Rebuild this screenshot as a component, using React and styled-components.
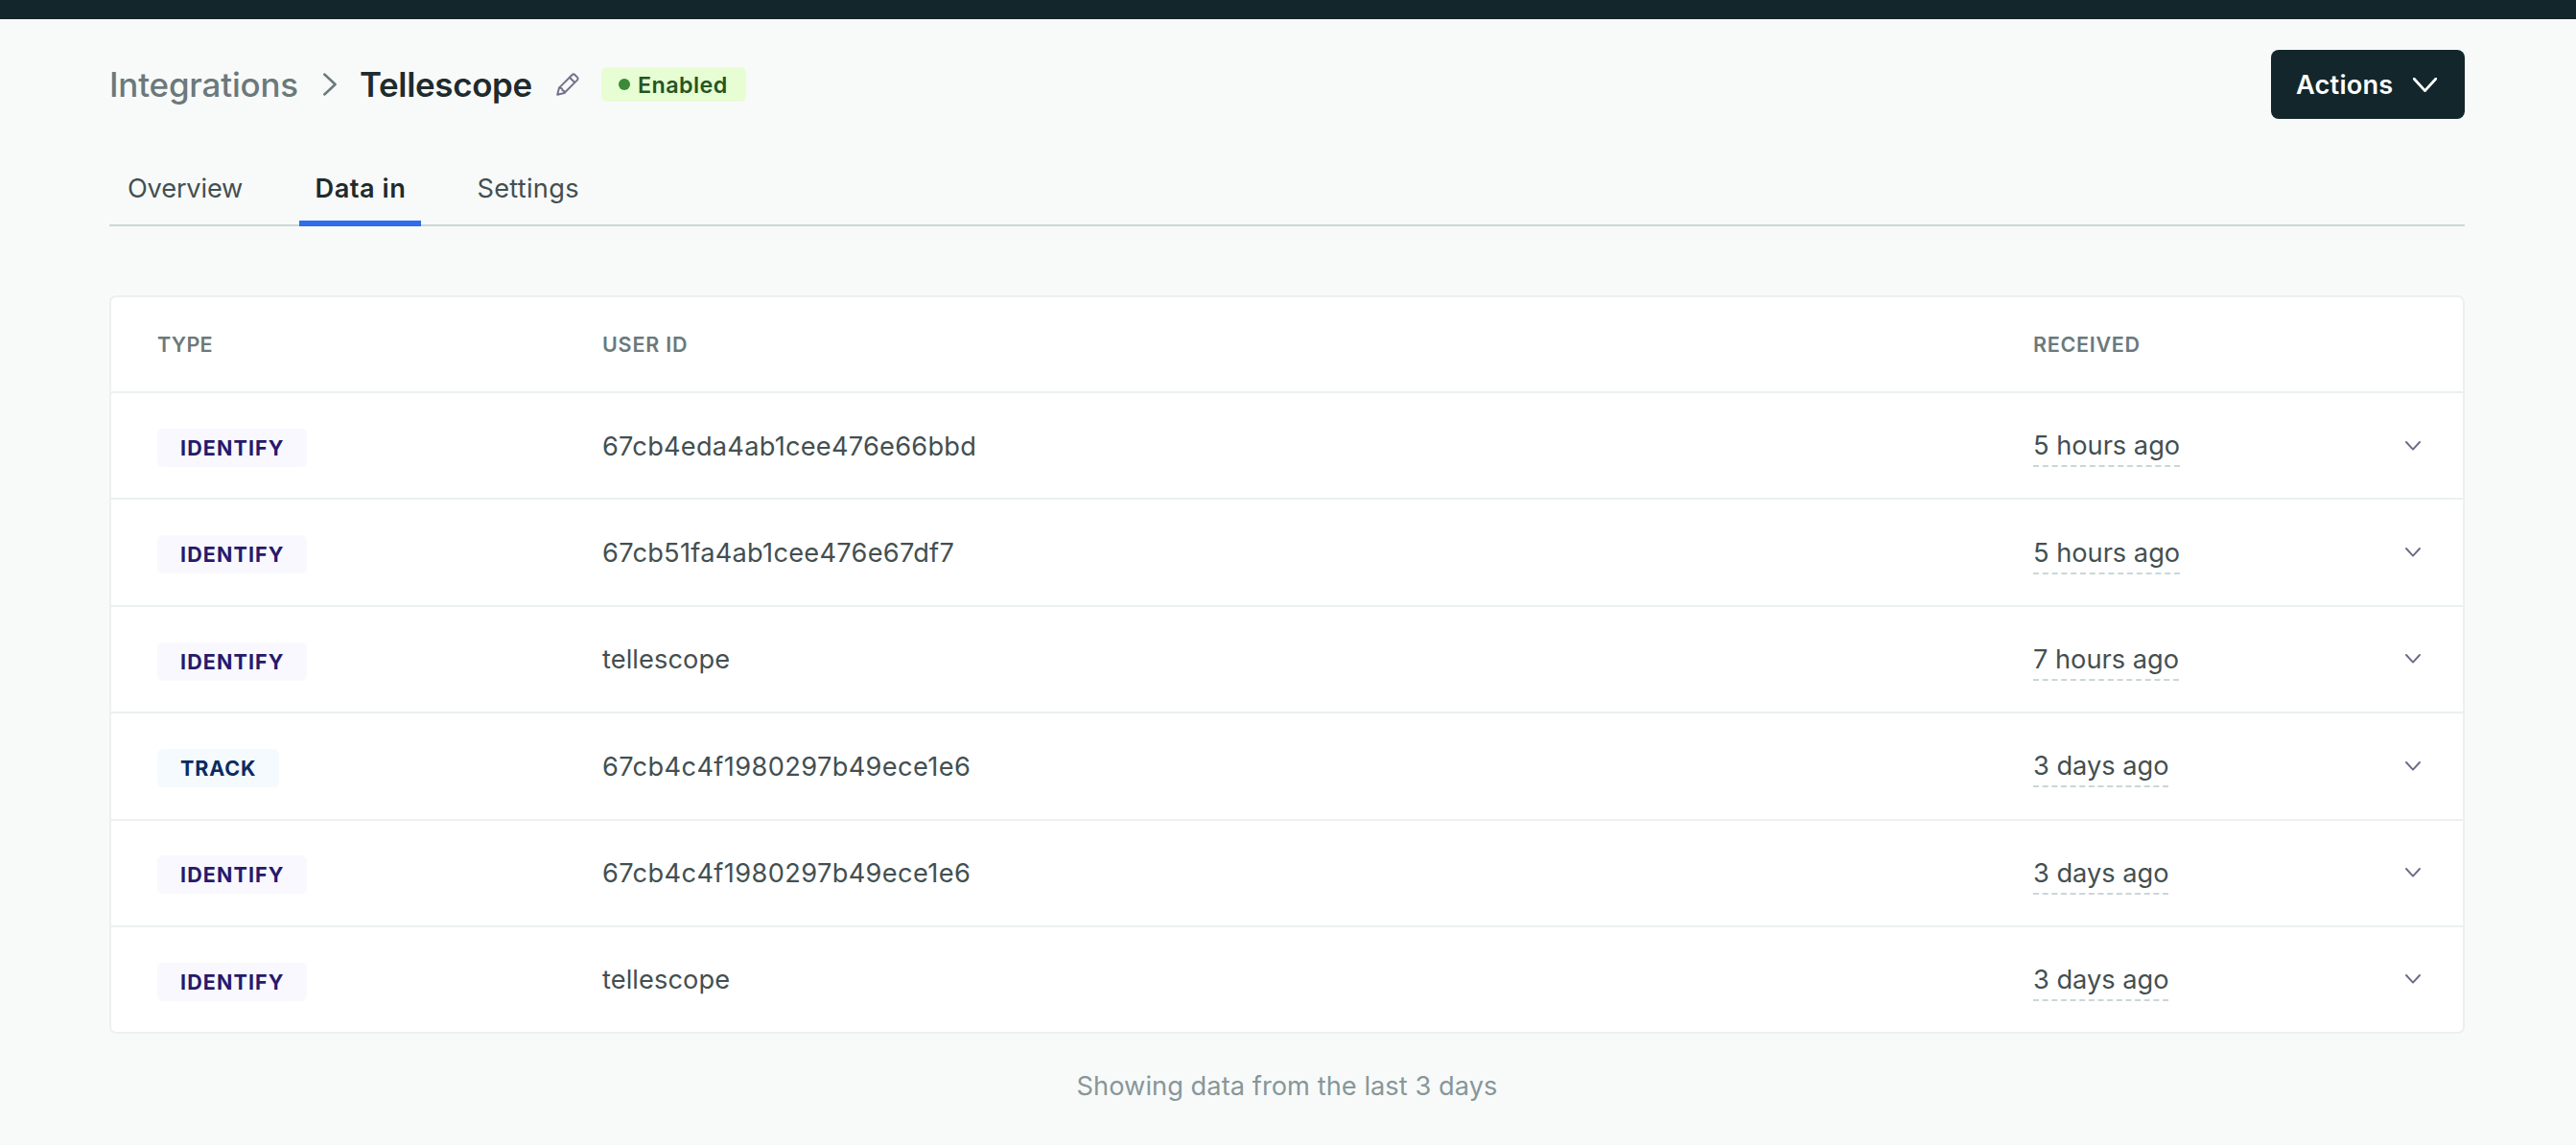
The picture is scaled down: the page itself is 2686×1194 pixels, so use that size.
import React from "react";
import styled, { createGlobalStyle } from "styled-components";

const GlobalStyle = createGlobalStyle`
  * { box-sizing: border-box; }
  body {
    margin: 0;
    background: #f8faf9;
    color: #434f51;
    font-family: Inter, "Liberation Sans", sans-serif;
    font-size: 27.2px;
    -webkit-font-smoothing: antialiased;
  }
`;

const Page = styled.div`
  min-height: 1194px;
`;

const TopBar = styled.div`
  height: 20px;
  background: #12262b;
`;

const Content = styled.main`
  padding: 32px 116px 0 114px;
`;

const Header = styled.header`
  display: flex;
  align-items: center;
  justify-content: space-between;
  height: 72px;
`;

const Breadcrumbs = styled.div`
  display: flex;
  align-items: center;
  height: 72px;
`;

const Crumb = styled.a`
  width: 223px;
  font-size: 34.9px;
  font-weight: 500;
  line-height: 48px;
  letter-spacing: -0.16px;
  color: #6b797b;
`;

const Title = styled.h1`
  width: 183px;
  margin: 0 0 0 24px;
  font-size: 34.9px;
  font-weight: 600;
  line-height: 48px;
  letter-spacing: -0.31px;
  color: #1f2b2c;
`;

const Status = styled.span`
  display: flex;
  align-items: center;
  width: 151px;
  height: 36px;
  margin-left: 23px;
  padding-left: 18px;
  gap: 8px;
  border-radius: 6px;
  background: #e7fdd3;
  color: #24561f;
  font-size: 23.3px;
  font-weight: 600;
  line-height: 37px;
  letter-spacing: 0.43px;
`;

const Dot = styled.i`
  width: 12px;
  height: 12px;
  border-radius: 50%;
  background: #3c8a38;
`;

const ActionsButton = styled.button`
  display: flex;
  align-items: center;
  justify-content: space-between;
  width: 202px;
  height: 72px;
  padding: 0 29px 0 26px;
  border: 0;
  border-radius: 8px;
  background: #12262b;
  color: #fff;
  font: inherit;
  font-weight: 600;
  letter-spacing: 0.2px;
`;

const Tabs = styled.nav`
  display: flex;
  gap: 44px;
  height: 80px;
  margin-top: 32px;
  padding-left: 3px;
  box-shadow: inset 0 -2px #cbd6d8;
`;

const Tab = styled.a`
  width: ${(p) => p.$width}px;
  padding-left: ${(p) => p.$inset}px;
  line-height: 81.5px;
  color: ${(p) => (p.$active ? "#1f2b2c" : "#434f51")};
  font-weight: ${(p) => (p.$active ? 600 : 400)};
  letter-spacing: ${(p) => p.$spacing}px;
  box-shadow: ${(p) => (p.$active ? "inset 0 -6px #2f6bee" : "none")};
`;

const Card = styled.section`
  height: 770px;
  margin-top: 72px;
  border: 2px solid #ebf0f0;
  border-radius: 7px;
  background: #fff;
`;

const Row = styled.div`
  display: grid;
  grid-template-columns: 464px 1492px 1fr 16px;
  align-items: center;
  height: 111.4px;
  padding: 0 44px 0 48px;
  border-bottom: 2px solid #ebf0f0;
  &:last-child {
    height: 109px;
    border-bottom: 0;
  }
`;

const HeadRow = styled(Row)`
  height: 100px;
`;

const HeadCell = styled.span`
  color: #6b797b;
  font-size: 21.5px;
  font-weight: 600;
  line-height: 32px;
  letter-spacing: ${(p) => p.$spacing}px;
`;

const TypeBadge = styled.span`
  justify-self: start;
  width: ${(p) => (p.$kind === "TRACK" ? 127 : 156)}px;
  height: 40px;
  margin-top: 4.2px;
  padding-left: 24px;
  border-radius: 6px;
  background: ${(p) => (p.$kind === "TRACK" ? "#f4fafe" : "#f8f8fe")};
  color: ${(p) => (p.$kind === "TRACK" ? "#0c2a60" : "#27196b")};
  font-size: 21.5px;
  font-weight: 700;
  line-height: 40px;
  letter-spacing: ${(p) => (p.$kind === "TRACK" ? 0.85 : 1.12)}px;
`;

const UserId = styled.span`
  padding-top: 2px;
  line-height: 40px;
  letter-spacing: ${(p) => p.$spacing}px;
`;

const Received = styled.span`
  justify-self: start;
  padding-top: 2px;
  line-height: 41px;
  border-bottom: 2px dashed #cbd6d8;
`;

const Footnote = styled.p`
  margin: 35px 0 0;
  color: #86979a;
  line-height: 40px;
  letter-spacing: 0.06px;
  text-align: center;
`;

const CrumbArrow = styled.svg`
  width: 14px;
  height: 24px;
  flex: none;
`;

const PencilIcon = styled.svg`
  width: 24px;
  height: 24px;
  margin-left: 22px;
  flex: none;
`;

const Chevron = ({ width, height, color, stroke }) => (
  <svg width={width} height={height} viewBox={`0 0 ${width} ${height}`} fill="none">
    <path
      d={`M1 1L${width / 2} ${height - 1.4}L${width - 1} 1`}
      stroke={color}
      strokeWidth={stroke}
      strokeLinecap="round"
      strokeLinejoin="round"
    />
  </svg>
);

const tabs = [
  { label: "Overview", width: 151, spacing: -0.17, inset: 16 },
  { label: "Data in", width: 127, spacing: 0.52, inset: 16.5, active: true },
  { label: "Settings", width: 137, spacing: 0.27, inset: 14.5 },
];

const events = [
  ["IDENTIFY", "67cb4eda4ab1cee476e66bbd", "5 hours ago", 0.25],
  ["IDENTIFY", "67cb51fa4ab1cee476e67df7", "5 hours ago", 0.27],
  ["IDENTIFY", "tellescope", "7 hours ago", 0.1],
  ["TRACK", "67cb4c4f1980297b49ece1e6", "3 days ago", 0.38],
  ["IDENTIFY", "67cb4c4f1980297b49ece1e6", "3 days ago", 0.38],
  ["IDENTIFY", "tellescope", "3 days ago", 0.1],
];

export default function App() {
  return (
    <Page>
      <GlobalStyle />
      <TopBar />
      <Content>
        <Header>
          <Breadcrumbs>
            <Crumb>Integrations</Crumb>
            <CrumbArrow viewBox="0 0 14 24" fill="none">
              <path d="M1.3 1.5L12.6 12L1.3 22.5" stroke="#6b797b" strokeWidth="2.5" strokeLinecap="round" strokeLinejoin="round" />
            </CrumbArrow>
            <Title>Tellescope</Title>
            <PencilIcon viewBox="0 0 24 24" fill="none" stroke="#74728c" strokeWidth="2" strokeLinejoin="round" strokeLinecap="round">
              <path d="M1.2 22.8L3 15.6L16.6 2Q18 0.8 19.4 2L22 4.6Q23.2 6 22 7.4L8.4 21Z" />
              <path d="M14 4.8L19.2 10M3 15.6Q6.6 15.6 6.4 18.2Q8.6 18 8.4 21" />
            </PencilIcon>
            <Status>
              <Dot />
              Enabled
            </Status>
          </Breadcrumbs>
          <ActionsButton>
            Actions
            <Chevron width={25} height={15} color="#fff" stroke={2.8} />
          </ActionsButton>
        </Header>
        <Tabs>
          {tabs.map((t) => (
            <Tab key={t.label} $width={t.width} $inset={t.inset} $spacing={t.spacing} $active={t.active}>
              {t.label}
            </Tab>
          ))}
        </Tabs>
        <Card>
          <HeadRow>
            <HeadCell $spacing={0.3}>TYPE</HeadCell>
            <HeadCell $spacing={0.8}>USER ID</HeadCell>
            <HeadCell $spacing={0.72}>RECEIVED</HeadCell>
          </HeadRow>
          {events.map(([type, user, received, spacing], i) => (
            <Row key={i}>
              <TypeBadge $kind={type}>{type}</TypeBadge>
              <UserId $spacing={spacing}>{user}</UserId>
              <Received>{received}</Received>
              <Chevron width={16} height={10} color="#6b6b88" stroke={1.9} />
            </Row>
          ))}
        </Card>
        <Footnote>Showing data from the last 3 days</Footnote>
      </Content>
    </Page>
  );
}
